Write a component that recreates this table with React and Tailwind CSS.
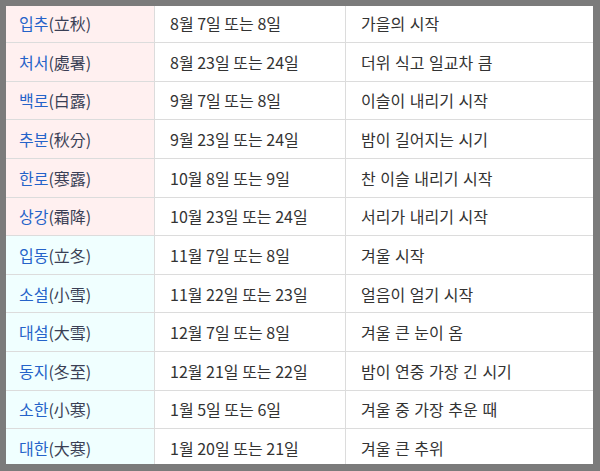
import React from "react";

const rows = [
  ["입추", "(立秋)", "8월 7일 또는 8일", "가을의 시작", "p"],
  ["처서", "(處暑)", "8월 23일 또는 24일", "더위 식고 일교차 큼", "p"],
  ["백로", "(白露)", "9월 7일 또는 8일", "이슬이 내리기 시작", "p"],
  ["추분", "(秋分)", "9월 23일 또는 24일", "밤이 길어지는 시기", "p"],
  ["한로", "(寒露)", "10월 8일 또는 9일", "찬 이슬 내리기 시작", "p"],
  ["상강", "(霜降)", "10월 23일 또는 24일", "서리가 내리기 시작", "p"],
  ["입동", "(立冬)", "11월 7일 또는 8일", "겨울 시작", "c"],
  ["소설", "(小雪)", "11월 22일 또는 23일", "얼음이 얼기 시작", "c"],
  ["대설", "(大雪)", "12월 7일 또는 8일", "겨울 큰 눈이 옴", "c"],
  ["동지", "(冬至)", "12월 21일 또는 22일", "밤이 연중 가장 긴 시기", "c"],
  ["소한", "(小寒)", "1월 5일 또는 6일", "겨울 중 가장 추운 때", "c"],
  ["대한", "(大寒)", "1월 20일 또는 21일", "겨울 큰 추위", "c"],
];

export default function App() {
  return (
    <div
      className="w-[600px] h-[471px] bg-[#7b7b7b] pl-[6px] pt-[6px]"
      style={{ fontFamily: '"Noto Sans CJK KR", "Noto Sans", sans-serif' }}
    >
      <div className="w-[587px] h-[458px] overflow-hidden bg-white">
        <div className="-mt-[2.6px] -ml-[3px] w-[596px] border-t border-[#dcdcdc]">
          {rows.map((r, i) => (
            <div
              key={i}
              className="grid grid-cols-[152px_191px_1fr] h-[38.64px] border-b border-[#dcdcdc] text-[16px] text-[#333]"
            >
              <div
                className={
                  "flex items-center pl-[16px] border-r border-[#dcdcdc] " +
                  (r[4] === "p" ? "bg-[#fff0f0]" : "bg-[#f0ffff]")
                }
              >
                <span className="text-[#2563c9]">{r[0]}</span>
                <span className="text-[#3a3f55]">{r[1]}</span>
              </div>
              <div className="flex items-center pl-[15px] border-r border-[#dcdcdc]">
                {r[2]}
              </div>
              <div className="flex items-center pl-[15px] [word-spacing:1px]">{r[3]}</div>
            </div>
          ))}
        </div>
      </div>
    </div>
  );
}
